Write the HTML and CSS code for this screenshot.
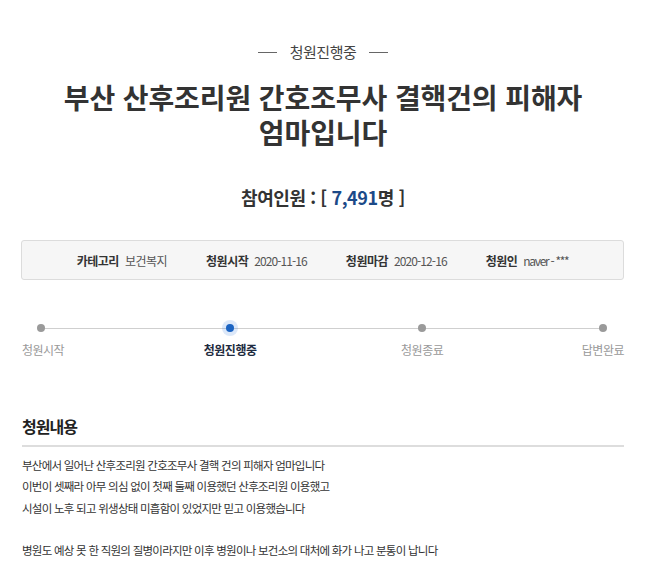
FILE: index.html
```html
<!DOCTYPE html>
<html lang="ko">
<head>
<meta charset="utf-8">
<title>청원진행중</title>
<link rel="stylesheet" href="styles.css">
</head>
<body>
<div class="page">
  <div class="status"><span class="status-line"></span><span class="status-text">청원진행중</span><span class="status-line"></span></div>
  <h1 class="title">부산 산후조리원 간호조무사 결핵건의 피해자<br>엄마입니다</h1>
  <div class="count">참여인원 : [ <span class="num">7,491</span>명 ]</div>
  <div class="info">
    <div class="info-item"><b>카테고리</b><span>보건복지</span></div>
    <div class="info-item"><b>청원시작</b><span class="date">2020-11-16</span></div>
    <div class="info-item"><b>청원마감</b><span class="date">2020-12-16</span></div>
    <div class="info-item"><b>청원인</b><span class="user">naver - ***</span></div>
  </div>
  <div class="steps">
    <div class="step"><i class="dot"></i><span>청원시작</span></div>
    <div class="step active"><i class="dot"></i><span>청원진행중</span></div>
    <div class="step third"><i class="dot"></i><span>청원종료</span></div>
    <div class="step"><i class="dot"></i><span>답변완료</span></div>
  </div>
  <h2 class="section-title">청원내용</h2>
  <div class="content">
    부산에서 일어난 산후조리원 간호조무사 결핵 건의 피해자 엄마입니다<br>
    이번이 셋째라 아무 의심 없이 첫째 둘째 이용했던 산후조리원 이용했고<br>
    시설이 노후 되고 위생상태 미흡함이 있었지만 믿고 이용했습니다<br>
    <br>
    병원도 예상 못 한 직원의 질병이라지만 이후 병원이나 보건소의 대처에 화가 나고 분통이 납니다
  </div>
</div>
</body>
</html>
```
FILE: styles.css
```css
* { box-sizing: border-box; }
html, body { margin: 0; padding: 0; background: #fff; }
body {
  font-family: "Noto Sans CJK KR", "Noto Sans", sans-serif;
  color: #333;
  overflow: hidden;
}
.page {
  width: 602px;
  margin-left: 22px;
}
.status {
  margin-top: 42px;
  height: 20px;
  display: flex;
  align-items: center;
  justify-content: center;
  gap: 13px;
  font-size: 15px;
  color: #444;
}
.status-line {
  width: 19px;
  height: 1px;
  background: #666;
}
.status-text { line-height: 20px; letter-spacing: -0.5px; }
.title {
  margin: 18px 0 0;
  font-size: 28px;
  line-height: 35px;
  font-weight: 700;
  text-align: center;
  color: #333;
  letter-spacing: -0.1px;
}
.count {
  margin-top: 35px;
  text-align: center;
  font-size: 18px;
  line-height: 24px;
  font-weight: 700;
  color: #333;
  letter-spacing: -0.4px;
}
.count .num { color: #1c4a88; }
.info {
  margin-top: 31px;
  margin-left: -1px;
  height: 40px;
  border: 1px solid #dcdcdc;
  border-radius: 3px;
  background: #f6f6f6;
  display: flex;
  align-items: center;
  justify-content: center;
  gap: 39px;
  font-size: 12px;
}
.info-item { display: flex; gap: 6px; align-items: center; letter-spacing: -0.5px; }
.info-item b { font-weight: 700; color: #333; }
.info-item span { color: #555; }
.info-item .date { letter-spacing: -0.9px; }
.info-item .user { letter-spacing: -1.3px; }
.steps {
  position: relative;
  margin-top: 44px;
  display: flex;
  justify-content: space-between;
}
.steps::before {
  content: "";
  position: absolute;
  left: 19px;
  right: 21px;
  top: 4px;
  height: 1px;
  background: #cfcfcf;
}
.step {
  position: relative;
  display: flex;
  flex-direction: column;
  align-items: center;
  gap: 10px;
  font-size: 12px;
  line-height: 16px;
  color: #999;
  letter-spacing: -0.5px;
}
.step:first-child .dot { margin-right: 5px; }
.step.active { margin-left: -5px; }
.step.third { margin-right: -6px; }
.dot {
  display: block;
  width: 8px;
  height: 8px;
  border-radius: 50%;
  background: #9a9a9a;
}
.step.active { color: #1e2b40; font-weight: 700; }
.step.active .dot {
  background: #1a63c2;
  box-shadow: 0 0 0 4px rgba(60, 130, 220, 0.18);
}
.section-title {
  margin: 57px 0 0;
  font-size: 16px;
  line-height: 22px;
  font-weight: 700;
  color: #222;
  padding-bottom: 8px;
  border-bottom: 2px solid #ddd;
  letter-spacing: -1px;
}
.content {
  padding-top: 8px;
  font-size: 11.5px;
  line-height: 21.3px;
  color: #333;
  letter-spacing: -0.75px;
}
```
